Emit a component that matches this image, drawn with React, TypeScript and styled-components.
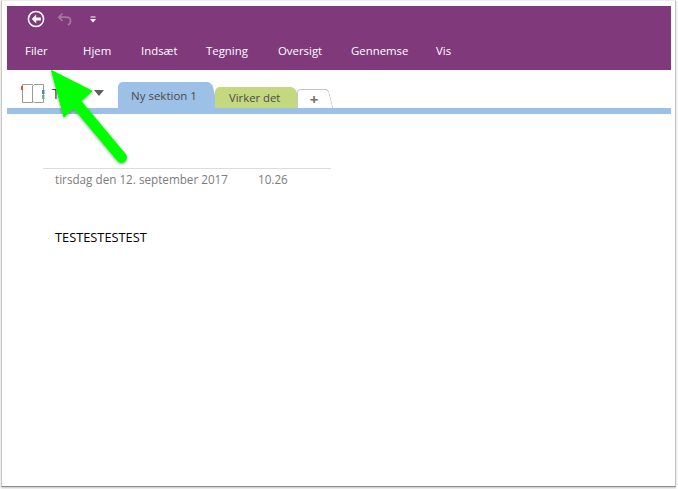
import styled, { createGlobalStyle } from "styled-components";

const GlobalStyle = createGlobalStyle`
  html, body {
    margin: 0;
    background: #fff;
  }
  body {
    width: 678px;
    height: 489px;
    overflow: hidden;
    font-family: "Open Sans", "Noto Sans", "Liberation Sans", sans-serif;
  }
`;

const menuItems = [
  { label: "Filer", width: 58 },
  { label: "Hjem", width: 58 },
  { label: "Indsæt", width: 65 },
  { label: "Tegning", width: 72 },
  { label: "Oversigt", width: 73 },
  { label: "Gennemse", width: 85 },
  { label: "Vis", width: 30 },
];

const App = () => {
  return (
    <>
      <GlobalStyle />
      <Page>
        <Window>
          <Ribbon>
            <QuickBar>
              <BackIcon />
              <UndoIcon />
              <CustomizeIcon />
            </QuickBar>
            <Menu>
              {menuItems.map((item) => (
                <MenuItem key={item.label} $width={item.width}>
                  {item.label}
                </MenuItem>
              ))}
            </Menu>
          </Ribbon>

          <TabBar>
            <Notebook>
              <BookIcon />
              <NotebookName>Test</NotebookName>
              <Caret />
            </Notebook>
            <Tabs>
              <Tab $color="#9dc1e6" $width={90} $height={26}>
                Ny sektion 1
              </Tab>
              <Tab $color="#c3d87f" $width={76} $height={21} $shift>
                Virker det
              </Tab>
              <AddTab>+</AddTab>
            </Tabs>
          </TabBar>
          <SectionLine />

          <NotePage>
            <TitleLine />
            <DateRow>
              <DateText>tirsdag den 12. september 2017</DateText>
              <DateText>10.26</DateText>
            </DateRow>
            <NoteText>TESTESTESTEST</NoteText>
          </NotePage>
        </Window>
        <Arrow />
      </Page>
    </>
  );
};

export default App;

const BackIcon = () => (
  <IconSvg width="18" height="18" viewBox="0 0 18 18">
    <circle cx="9" cy="9" r="7.6" fill="none" stroke="#fff" strokeWidth="1.5" />
    <path d="M9.2 4.6 4.8 9l4.4 4.4V10.600h4.600V7.400H9.200z" fill="#fff" />
  </IconSvg>
);

const UndoIcon = () => (
  <IconSvg width="21" height="14" viewBox="0 0 21 14">
    <path
      d="M5.500 1.500 1.800 5.200l3.700 3.700M2.500 5.200h6.800c2.700 0 4.300 1.700 4.300 3.700 0 1.800-1 3.300-2.800 4"
      fill="none"
      stroke="#a178a0"
      strokeWidth="1.700"
    />
  </IconSvg>
);

const CustomizeIcon = () => (
  <IconSvg width="6" height="9" viewBox="0 -2 6 9">
    <path d="M0.500 0.500h5v1h-5zM0 3h6L3 6.500z" fill="#fff" />
  </IconSvg>
);

const BookIcon = () => (
  <IconSvg width="24" height="20" viewBox="0 0 24 20">
    <path
      d="M1.500 1.500h10l1 1 1-1h9v18h-9l-1-.8-1 .8h-10zM11.500 2.500v16.500"
      fill="#fff"
      stroke="#9a9a9a"
      strokeWidth="1"
    />
    <rect x="0" y="3" width="2" height="4" fill="#d9532c" />
    <rect x="21" y="7" width="2.500" height="4" fill="#4a86c5" />
    <rect x="21" y="12" width="2.500" height="4" fill="#6fb0a0" />
  </IconSvg>
);

const Arrow = () => (
  <ArrowSvg viewBox="0 0 140 170">
    <defs>
      <filter id="arrow-shadow" x="-20%" y="-20%" width="140%" height="140%">
        <feDropShadow dx="0" dy="1" stdDeviation="1.500" floodColor="#000" floodOpacity="0.4" />
      </filter>
    </defs>
    <g filter="url(#arrow-shadow)" fill="#00ff00" stroke="#00ff00" strokeLinejoin="round">
      <path d="M51.500 70.500 92 91 64 117z" strokeWidth="1" />
      <path d="M76 103 121.500 157.500" strokeWidth="11" strokeLinecap="round" fill="none" />
    </g>
  </ArrowSvg>
);

const IconSvg = styled.svg`
  display: block;
  flex: none;
`;

const ArrowSvg = styled.svg`
  position: absolute;
  left: 0;
  top: 0;
  width: 140px;
  height: 170px;
  overflow: visible;
  pointer-events: none;
`;

const Page = styled.div`
  position: relative;
  width: 678px;
  height: 489px;
  padding: 0 2px 2px 1px;
  box-sizing: border-box;
`;

const Window = styled.div`
  width: 675px;
  height: 487px;
  box-sizing: border-box;
  padding: 5px 4px 0 5px;
  background: #fff;
  border-top: 1px solid #ececec;
  border-left: 1px solid #c8c8c8;
  border-right: 1px solid #c4c4c4;
  border-bottom: 1px solid #8a8a8a;
  box-shadow: 0 1px 2px rgba(0, 0, 0, 0.25);
`;

const Ribbon = styled.div`
  height: 64px;
  background: #80397b;
  display: flex;
  flex-direction: column;
`;

const QuickBar = styled.div`
  height: 26px;
  padding: 0 0 1px 20px;
  box-sizing: border-box;
  display: flex;
  align-items: center;
  gap: 12px;
`;

const Menu = styled.div`
  display: flex;
  padding: 10px 0 0 18px;
`;

const MenuItem = styled.div<{ $width: number }>`
  width: ${(props) => props.$width}px;
  color: #fff;
  font-size: 11.4px;
  line-height: 17px;
`;

const TabBar = styled.div`
  height: 38px;
  display: flex;
  align-items: flex-end;
`;

const Notebook = styled.div`
  width: 111px;
  height: 34px;
  padding: 4px 0 0 14px;
  box-sizing: border-box;
  display: flex;
  align-items: center;
  gap: 7px;
`;

const NotebookName = styled.span`
  font-size: 14px;
  color: #444;
  width: 35px;
`;

const Caret = styled.span`
  width: 0;
  height: 0;
  border-left: 5px solid transparent;
  border-right: 5px solid transparent;
  border-top: 6px solid #5f5f5f;
`;

const Tabs = styled.div`
  display: flex;
  align-items: flex-end;
`;

const Tab = styled.div<{ $color: string; $width: number; $height: number; $shift?: boolean }>`
  position: relative;
  width: ${(props) => props.$width}px;
  height: ${(props) => props.$height}px;
  background: ${(props) => props.$color};
  border-radius: 5px 0 0 0;
  box-sizing: border-box;
  padding: ${(props) => (props.$shift ? "0 0 0 14px" : "1px 0 0 13px")};
  margin-right: ${(props) => (props.$shift ? 6 : 7)}px;
  color: #4a4a4a;
  font-size: ${(props) => (props.$shift ? 11.3 : 11.5)}px;
  line-height: ${(props) => props.$height}px;

  &::after {
    content: "";
    position: absolute;
    top: 0;
    bottom: 0;
    right: -7px;
    width: 14px;
    background: ${(props) => props.$color};
    border-radius: 0 5px 0 0;
    transform: skewX(14deg);
  }
`;

const AddTab = styled.div`
  position: relative;
  width: 30px;
  height: 19px;
  padding-left: 3px;
  box-sizing: border-box;
  border-top: 1px solid #c6c6c6;
  border-left: 1px solid #c6c6c6;
  border-radius: 4px 0 0 0;
  background: #fff;
  color: #6e6e6e;
  font-size: 15px;
  font-weight: 700;
  line-height: 19px;
  text-align: center;

  &::after {
    content: "";
    position: absolute;
    top: -1px;
    bottom: 0;
    right: -4px;
    width: 8px;
    border-top: 1px solid #c6c6c6;
    border-right: 1px solid #c6c6c6;
    border-radius: 0 4px 0 0;
    transform: skewX(14deg);
  }
`;

const SectionLine = styled.div`
  height: 6px;
  background: #9dc1e6;
`;

const NotePage = styled.div`
  padding: 54px 0 0 36px;
`;

const TitleLine = styled.div`
  width: 288px;
  height: 1px;
  background: #dcdcdc;
`;

const DateRow = styled.div`
  display: flex;
  gap: 30px;
  padding: 2px 0 0 12px;
`;

const DateText = styled.span`
  color: #7c7c7c;
  font-size: 11.7px;
  line-height: 17px;
`;

const NoteText = styled.div`
  padding: 41px 0 0 12px;
  color: #000;
  font-size: 12.8px;
  line-height: 17px;
`;
